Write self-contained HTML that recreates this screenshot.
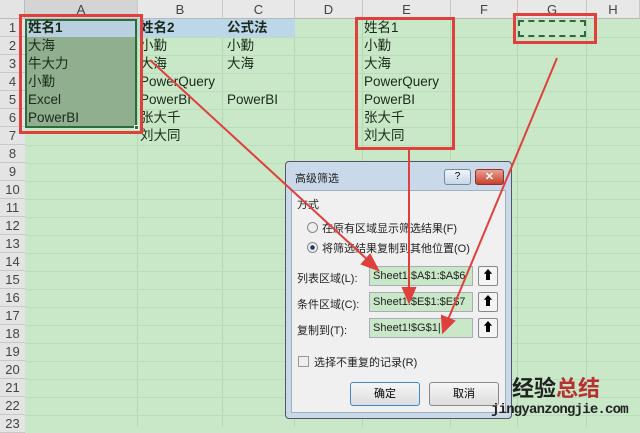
<!DOCTYPE html>
<html><head><meta charset="utf-8"><style>
*{margin:0;padding:0;box-sizing:border-box}
body{width:640px;height:427px;overflow:hidden;background:#c8e8c8;font-family:"Liberation Sans","Noto Sans CJK SC",sans-serif;position:relative}
.a{position:absolute}
.t{position:absolute;font-size:13.5px;line-height:18px;color:#1a2a1a;white-space:nowrap}
.rn{position:absolute;left:0;width:25px;height:18px;font-size:13px;line-height:18px;text-align:center;color:#444;background:#e4e4e4;border-bottom:1px solid #c8c8c8}
.ch{position:absolute;top:0;height:19px;background:#e8e8e8;border-right:1px solid #c8c8c8;border-bottom:1px solid #b8b8b8;font-size:13px;line-height:19px;text-align:center;color:#444}
.dt{position:absolute;font-size:11px;color:#222;white-space:nowrap}
.in{position:absolute;left:369px;width:104px;height:20px;background:#c8e8c8;border:1px solid #aab;font-size:11px;line-height:18px;padding-left:3px;color:#222;white-space:nowrap;overflow:hidden;letter-spacing:0}
.ib{position:absolute;left:478px;width:20px;height:20px;background:#f4f4f4;border:1px solid #888;border-radius:2px;font-size:12px;text-align:center;line-height:17px;font-weight:bold}
.btn{position:absolute;top:382px;width:70px;height:24px;border:1px solid #888;border-radius:3px;background:linear-gradient(#f6f6f6,#ddd);font-size:11px;text-align:center;line-height:22px}
</style></head><body>
<svg class="a" style="left:0;top:0" width="640" height="427">
<g stroke="#b6d6b6" stroke-width="1">
<line x1="137.5" y1="19" x2="137.5" y2="427"/><line x1="222.5" y1="19" x2="222.5" y2="427"/><line x1="294.5" y1="19" x2="294.5" y2="427"/><line x1="362.5" y1="19" x2="362.5" y2="427"/><line x1="450.5" y1="19" x2="450.5" y2="427"/><line x1="517.5" y1="19" x2="517.5" y2="427"/><line x1="586.5" y1="19" x2="586.5" y2="427"/>
</g>
<g stroke="#bcdcbc">
<line x1="25" y1="37.5" x2="640" y2="37.5"/><line x1="25" y1="55.5" x2="640" y2="55.5"/><line x1="25" y1="73.5" x2="640" y2="73.5"/><line x1="25" y1="91.5" x2="640" y2="91.5"/><line x1="25" y1="109.5" x2="640" y2="109.5"/><line x1="25" y1="127.5" x2="640" y2="127.5"/><line x1="25" y1="145.5" x2="640" y2="145.5"/><line x1="25" y1="163.5" x2="640" y2="163.5"/><line x1="25" y1="181.5" x2="640" y2="181.5"/><line x1="25" y1="199.5" x2="640" y2="199.5"/><line x1="25" y1="217.5" x2="640" y2="217.5"/><line x1="25" y1="235.5" x2="640" y2="235.5"/><line x1="25" y1="253.5" x2="640" y2="253.5"/><line x1="25" y1="271.5" x2="640" y2="271.5"/><line x1="25" y1="289.5" x2="640" y2="289.5"/><line x1="25" y1="307.5" x2="640" y2="307.5"/><line x1="25" y1="325.5" x2="640" y2="325.5"/><line x1="25" y1="343.5" x2="640" y2="343.5"/><line x1="25" y1="361.5" x2="640" y2="361.5"/><line x1="25" y1="379.5" x2="640" y2="379.5"/><line x1="25" y1="397.5" x2="640" y2="397.5"/><line x1="25" y1="415.5" x2="640" y2="415.5"/>
</g></svg>
<div class="a" style="left:0;top:0;width:25px;height:19px;background:#e4e4e4;border-right:1px solid #bbb;border-bottom:1px solid #bbb"></div>
<div class="ch" style="left:25px;width:113px;background:#d4d4d4">A</div>
<div class="ch" style="left:138px;width:85px">B</div>
<div class="ch" style="left:223px;width:72px">C</div>
<div class="ch" style="left:295px;width:68px">D</div>
<div class="ch" style="left:363px;width:88px">E</div>
<div class="ch" style="left:451px;width:67px">F</div>
<div class="ch" style="left:518px;width:69px">G</div>
<div class="ch" style="left:587px;width:53px">H</div>
<div class="a" style="left:0;top:19px;width:25px;height:408px;background:#e4e4e4;border-right:1px solid #bbb"></div>
<div class="rn" style="top:19px">1</div><div class="rn" style="top:37px">2</div><div class="rn" style="top:55px">3</div><div class="rn" style="top:73px">4</div><div class="rn" style="top:91px">5</div><div class="rn" style="top:109px">6</div><div class="rn" style="top:127px">7</div><div class="rn" style="top:145px">8</div><div class="rn" style="top:163px">9</div><div class="rn" style="top:181px">10</div><div class="rn" style="top:199px">11</div><div class="rn" style="top:217px">12</div><div class="rn" style="top:235px">13</div><div class="rn" style="top:253px">14</div><div class="rn" style="top:271px">15</div><div class="rn" style="top:289px">16</div><div class="rn" style="top:307px">17</div><div class="rn" style="top:325px">18</div><div class="rn" style="top:343px">19</div><div class="rn" style="top:361px">20</div><div class="rn" style="top:379px">21</div><div class="rn" style="top:397px">22</div><div class="rn" style="top:415px">23</div>
<div class="a" style="left:138px;top:19px;width:157px;height:18px;background:#bcd6ea"></div>
<div class="a" style="left:25px;top:19px;width:112px;height:109px;background:#8faf8f;border:2px solid #2e6b3a"></div>
<div class="a" style="left:27px;top:21px;width:108px;height:16px;background:#b8d0e0"></div>
<div class="a" style="left:134px;top:125px;width:5px;height:5px;background:#2e6b3a;border:1px solid #fff"></div>
<div class="t" style="left:28px;top:19px;font-weight:bold">姓名1</div>
<div class="t" style="left:28px;top:37px">大海</div><div class="t" style="left:28px;top:55px">牛大力</div><div class="t" style="left:28px;top:73px">小勤</div><div class="t" style="left:28px;top:91px">Excel</div><div class="t" style="left:28px;top:109px">PowerBI</div>
<div class="t" style="left:140px;top:19px;font-weight:bold">姓名2</div>
<div class="t" style="left:140px;top:37px">小勤</div><div class="t" style="left:140px;top:55px">大海</div><div class="t" style="left:140px;top:73px">PowerQuery</div><div class="t" style="left:140px;top:91px">PowerBI</div><div class="t" style="left:140px;top:109px">张大千</div><div class="t" style="left:140px;top:127px">刘大同</div>
<div class="t" style="left:227px;top:19px;font-weight:bold">公式法</div>
<div class="t" style="left:227px;top:37px">小勤</div><div class="t" style="left:227px;top:55px">大海</div><div class="t" style="left:227px;top:91px">PowerBI</div>
<div class="t" style="left:364px;top:19px">姓名1</div><div class="t" style="left:364px;top:37px">小勤</div><div class="t" style="left:364px;top:55px">大海</div><div class="t" style="left:364px;top:73px">PowerQuery</div><div class="t" style="left:364px;top:91px">PowerBI</div><div class="t" style="left:364px;top:109px">张大千</div><div class="t" style="left:364px;top:127px">刘大同</div>
<div class="a" style="left:19px;top:14px;width:124px;height:120px;border:3px solid #e0403c"></div>
<div class="a" style="left:355px;top:17px;width:100px;height:133px;border:3px solid #e0403c"></div>
<div class="a" style="left:513px;top:13px;width:84px;height:31px;border:3px solid #e0403c"></div>
<div class="a" style="left:518px;top:20px;width:68px;height:17px;border:2px dashed #2e6b3a"></div>
<div class="a" style="left:285px;top:161px;width:227px;height:258px;background:#c9d9ea;border:1px solid #556;border-radius:4px"></div>
<div class="a" style="left:291px;top:190px;width:215px;height:223px;background:#f0f0f0;border:1px solid #a0b0c0"></div>
<div class="dt" style="left:295px;top:170px">高级筛选</div>
<div class="a" style="left:444px;top:169px;width:27px;height:16px;border:1px solid #789;border-radius:3px;background:linear-gradient(#eef4fa,#c8d6e6);font-size:10px;text-align:center;line-height:14px">?</div>
<div class="a" style="left:475px;top:169px;width:29px;height:16px;border:1px solid #833;border-radius:3px;background:linear-gradient(#e8a090,#c8402c);color:#fff;font-size:11px;font-weight:bold;text-align:center;line-height:14px">✕</div>
<div class="dt" style="left:297px;top:196px">方式</div>
<div class="a" style="left:307px;top:222px;width:11px;height:11px;border:1px solid #888;border-radius:50%;background:#eee"></div>
<div class="dt" style="left:322px;top:220px">在原有区域显示筛选结果(F)</div>
<div class="a" style="left:307px;top:242px;width:11px;height:11px;border:1px solid #888;border-radius:50%;background:radial-gradient(#236 30%,#eee 40%)"></div>
<div class="dt" style="left:322px;top:240px">将筛选结果复制到其他位置(O)</div>
<div class="dt" style="left:297px;top:270px">列表区域(L):</div>
<div class="in" style="top:266px">Sheet1!$A$1:$A$6</div><div class="ib" style="top:266px">⬆</div>
<div class="dt" style="left:297px;top:296px">条件区域(C):</div>
<div class="in" style="top:292px">Sheet1!$E$1:$E$7</div><div class="ib" style="top:292px">⬆</div>
<div class="dt" style="left:297px;top:322px">复制到(T):</div>
<div class="in" style="top:318px">Sheet1!$G$1|</div><div class="ib" style="top:318px">⬆</div>
<div class="a" style="left:298px;top:356px;width:11px;height:11px;border:1px solid #999;background:#eee"></div>
<div class="dt" style="left:314px;top:354px">选择不重复的记录(R)</div>
<div class="btn" style="left:350px;border-color:#3c8ccc">确定</div>
<div class="btn" style="left:429px">取消</div>
<svg class="a" style="left:0;top:0" width="640" height="427">
<g stroke="#e0403c" stroke-width="2" fill="#e0403c">
<line x1="150" y1="60" x2="370" y2="262"/><polygon points="378,270 362,264 370,255"/>
<line x1="409" y1="150" x2="409" y2="292"/><polygon points="409,302 403,288 415,288"/>
<line x1="557" y1="58" x2="447" y2="322"/><polygon points="443,332 442,316 454,321"/>
</g></svg>
<div class="a" style="left:512px;top:374px;font-size:22px;font-weight:bold;color:#222;font-family:'Noto Sans CJK SC',sans-serif;line-height:26px">经验<span style="color:#b83030">总结</span></div>
<div class="a" style="left:491px;top:402px;font-size:14px;color:#222;font-family:'Liberation Mono',monospace;font-weight:bold;letter-spacing:-0.8px">jingyanzongjie.com</div>
</body></html>
